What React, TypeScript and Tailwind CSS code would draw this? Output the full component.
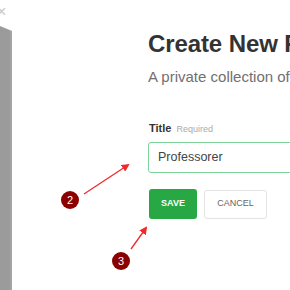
import React from "react";

export default function App() {
  return (
    <div className="relative w-[290px] h-[290px] overflow-hidden bg-white" style={{ fontFamily: '"Liberation Sans", Arial, sans-serif' }}>
      {/* close x */}
      <div className="absolute left-[-3px] top-[4px] text-[16px] leading-none text-[#c8c8c8]">×</div>
      {/* left grey panel */}
      <svg className="absolute left-0 top-0" width="14" height="290">
        <polygon points="0,26 12,31 12,290 0,290" fill="#9b9b9b" />
        <rect x="10" y="31" width="2" height="259" fill="#a4a4a4" />
      </svg>

      <div className="pl-[148px] pt-[30px] whitespace-nowrap">
        <h1 className="text-[24px] font-bold text-[#333] leading-[28px] tracking-[-0.1px]">Create New Folder</h1>
        <p className="mt-[10px] text-[15px] text-[#707070] leading-[18px]">A private collection of items</p>
        <div className="mt-[34px] flex items-baseline gap-[5px] pl-[1px]">
          <span className="text-[11px] font-bold text-[#333]">Title</span>
          <span className="text-[9px] text-[#aaa]">Required</span>
        </div>
        <div className="mt-[5px] w-[200px] h-[31px] border border-[#7ed39a] rounded-[3px] flex items-center pl-[9px]">
          <span className="text-[12.5px] text-[#444]">Professorer</span>
        </div>
        <div className="mt-[16px] ml-[1px] flex gap-[7px]">
          <button className="w-[48px] h-[30px] rounded-[3px] bg-[#28a745] text-white text-[9px] font-bold">SAVE</button>
          <button className="w-[63px] h-[29px] mt-[1px] rounded-[3px] border border-[#e3e3e3] bg-white text-[#666] text-[9px]">CANCEL</button>
        </div>
      </div>

      {/* annotations */}
      <svg className="absolute left-0 top-0 pointer-events-none" width="290" height="290">
        <defs>
          <marker id="ah" markerWidth="8" markerHeight="8" refX="6" refY="4" orient="auto" markerUnits="userSpaceOnUse">
            <path d="M0,0 L8,4 L0,8 Z" fill="#ee2b2b" />
          </marker>
        </defs>
        <line x1="84" y1="194" x2="128" y2="165" stroke="#ee2b2b" strokeWidth="1.3" markerEnd="url(#ah)" />
        <line x1="131" y1="249" x2="146" y2="228" stroke="#ee2b2b" strokeWidth="1.3" markerEnd="url(#ah)" />
      </svg>
      <div className="absolute left-[61px] top-[191px] w-[18px] h-[18px] rounded-full bg-[#8b0000] text-white text-[11px] flex items-center justify-center">2</div>
      <div className="absolute left-[112px] top-[252px] w-[18px] h-[18px] rounded-full bg-[#8b0000] text-white text-[11px] flex items-center justify-center">3</div>
    </div>
  );
}
